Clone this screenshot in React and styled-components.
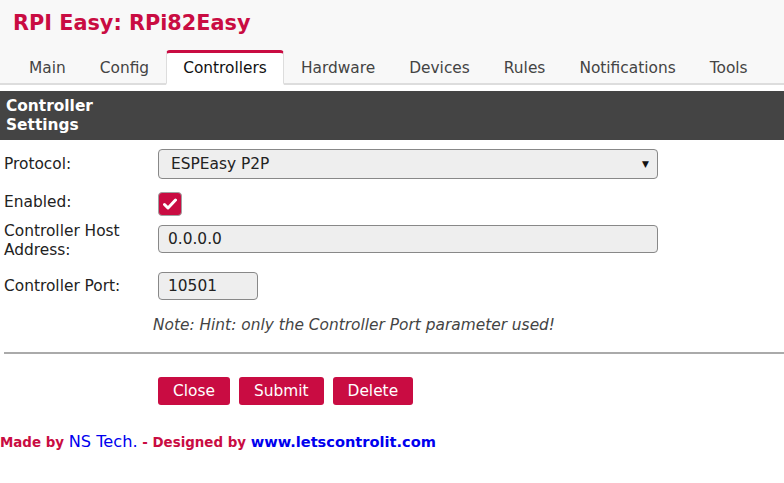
import React from "react";
import styled, { createGlobalStyle } from "styled-components";

const RED = "#c90c42";
const FONT = `"DejaVu Sans", Verdana, sans-serif`;

const Global = createGlobalStyle`
  html, body { margin: 0; padding: 0; background: #fff; }
  body { font-family: ${FONT}; color: #444; }
  * { box-sizing: border-box; }
`;

const Header = styled.header`
  background: #f8f8f8;
  border-bottom: 2px solid #ddd;
  padding-top: 9px;
`;

const Title = styled.h1`
  margin: 0 0 0 13px;
  font-family: ${FONT};
  font-size: 20.8px;
  font-weight: bold;
  color: ${RED};
  line-height: 29px;
`;

const MenuBar = styled.nav`
  display: flex;
  gap: 0;
  padding-left: 12px;
  margin-top: 12px;
  margin-bottom: -2px;
`;

const MenuItem = styled.a`
  display: block;
  padding: 4px 16px 4px;
  font-size: 15.4px;
  line-height: 22px;
  color: ${(p) => (p.$active ? "#111" : "#444")};
  background: ${(p) => (p.$active ? "#fff" : "transparent")};
  border: 1px solid ${(p) => (p.$active ? "#ddd" : "transparent")};
  border-top: 3px solid ${(p) => (p.$active ? RED : "transparent")};
  border-bottom: ${(p) => (p.$active ? "2px solid #fff" : "2px solid transparent")};
  border-radius: 4px 4px 0 0;
  text-decoration: none;
`;

const Main = styled.main`
  padding-top: 6px;
`;

const SectionHead = styled.div`
  background: #444;
  color: #fff;
  font-weight: bold;
  font-size: 15.4px;
  line-height: 19px;
  padding: 6px 6px 5px;
  width: 100%;
`;

const HeadText = styled.div`
  width: 120px;
`;

const Form = styled.div`
  display: grid;
  grid-template-columns: 158px 1fr;
  padding-top: 9px;
`;

const Label = styled.div`
  padding-left: 4px;
  font-size: 15.4px;
  line-height: 19px;
  color: #222;
  display: flex;
  align-items: ${(p) => (p.$top ? "flex-start" : "center")};
  min-height: ${(p) => p.$h || 30}px;
  padding-top: ${(p) => p.$pt || 0}px;
`;

const Cell = styled.div`
  display: flex;
  align-items: ${(p) => (p.$top ? "flex-start" : "center")};
  min-height: ${(p) => p.$h || 30}px;
  padding-top: ${(p) => p.$pt || 0}px;
`;

const Field = styled.div`
  width: ${(p) => p.$w}px;
  height: ${(p) => p.$ht || 28}px;
  background: #eee;
  border: 1px solid #888;
  border-radius: 4px;
  display: flex;
  align-items: center;
  justify-content: space-between;
  padding: 0 8px 0 ${(p) => p.$pl || 9}px;
  font-size: 15.4px;
  color: #222;
`;

const Arrow = styled.span`
  font-size: 9px;
  color: #111;
`;

const Check = styled.div`
  width: 24px;
  height: 24px;
  background: ${RED};
  border: 1px solid #a0a0a0;
  border-radius: 4px;
  display: flex;
  align-items: center;
  justify-content: center;
`;

const Note = styled.div`
  grid-column: 1 / 3;
  padding-left: 153px;
  font-style: italic;
  font-size: 15.4px;
  color: #444;
  line-height: 20px;
  margin-top: 15px;
`;

const Rule = styled.hr`
  border: none;
  border-top: 2px solid #aaa;
  margin: 17px 0 0 4px;
`;

const Buttons = styled.div`
  display: flex;
  gap: 9px;
  padding-left: 158px;
  margin-top: 23px;
`;

const Button = styled.button`
  background: ${RED};
  color: #fff;
  border: none;
  border-radius: 3px;
  height: 28px;
  padding: 0 15px;
  font-family: ${FONT};
  font-size: 15.4px;
  line-height: 28px;
`;

const Footer = styled.footer`
  margin-top: 27px;
  line-height: 20px;
`;

const Red = styled.span`
  color: ${RED};
  font-weight: bold;
  font-size: 13.4px;
`;

const Blue = styled.span`
  color: #0000ee;
  font-size: ${(p) => p.$size || 14}px;
  font-weight: ${(p) => (p.$bold ? "bold" : "normal")};
`;

const tabs = ["Main", "Config", "Controllers", "Hardware", "Devices", "Rules", "Notifications", "Tools"];

export default function App() {
  return (
    <>
      <Global />
      <Header>
        <Title>RPI Easy: RPi82Easy</Title>
        <MenuBar>
          {tabs.map((t) => (
            <MenuItem key={t} $active={t === "Controllers"}>
              {t}
            </MenuItem>
          ))}
        </MenuBar>
      </Header>
      <Main>
        <SectionHead>
          <HeadText>Controller Settings</HeadText>
        </SectionHead>
        <Form>
          <Label $h={30}>Protocol:</Label>
          <Cell $h={30}>
            <Field $w={500} $ht={30} $pl={12}>
              <span>ESPEasy P2P</span>
              <Arrow>▼</Arrow>
            </Field>
          </Cell>
          <Label $h={43} $top $pt={14}>Enabled:</Label>
          <Cell $h={43} $top $pt={13}>
            <Check>
              <svg width="14" height="12" viewBox="0 0 14 12">
                <path d="M1.5 6.5 L5 10 L12.5 2" fill="none" stroke="#fff" strokeWidth="3" strokeLinecap="round" strokeLinejoin="round" />
              </svg>
            </Check>
          </Cell>
          <Label $h={41} $top $pt={0}>Controller Host<br />Address:</Label>
          <Cell $h={41} $top $pt={3}>
            <Field $w={500}>0.0.0.0</Field>
          </Cell>
          <Label $h={37} $pt={9}>Controller Port:</Label>
          <Cell $h={37} $top $pt={9}>
            <Field $w={100}>10501</Field>
          </Cell>
          <Note>Note: Hint: only the Controller Port parameter used!</Note>
        </Form>
        <Rule />
        <Buttons>
          <Button>Close</Button>
          <Button>Submit</Button>
          <Button>Delete</Button>
        </Buttons>
        <Footer>
          <Red>Made by </Red>
          <Blue $size={16.2}>NS Tech.</Blue>
          <Red> - Designed by </Red>
          <Blue $bold $size={14.6}>www.letscontrolit.com</Blue>
        </Footer>
      </Main>
    </>
  );
}
